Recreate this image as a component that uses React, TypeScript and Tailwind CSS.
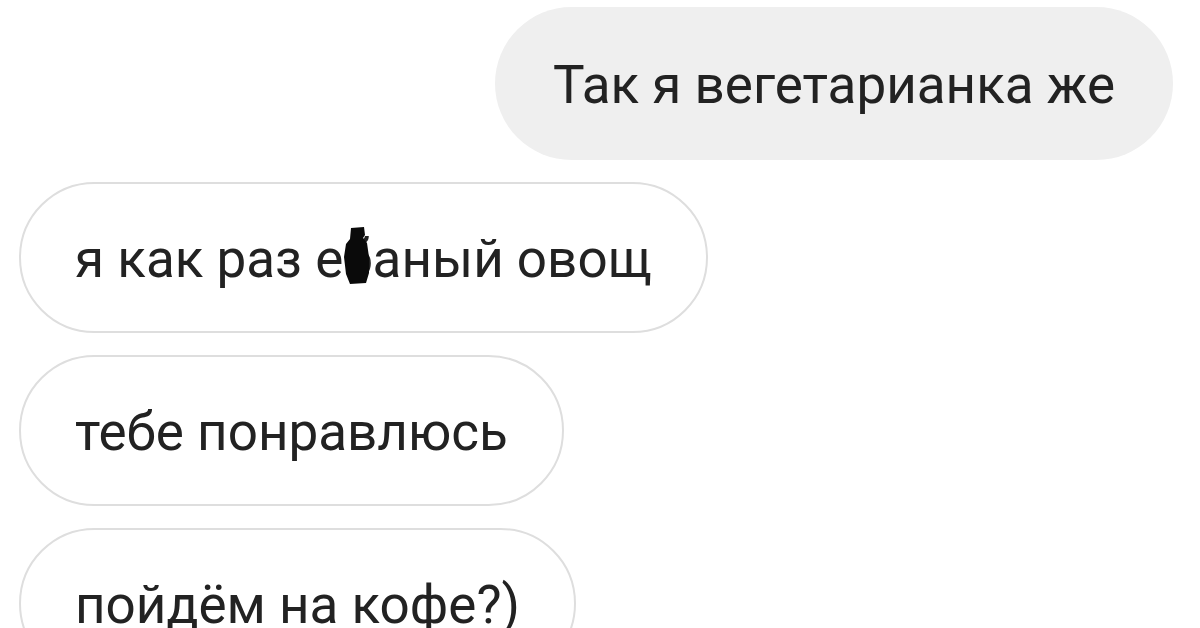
const Censored = ({ ch }: { ch: string }) => (
  <span className="relative inline-block">
    {ch}
    <svg
      className="absolute left-[1px] top-[-6px]"
      width="26"
      height="57"
      viewBox="0 0 26 57"
    >
      <path
        d="M7 1 L20 0 L21 8 L19 11 L23 16 L25 30 L25 46 L22 56 L6 57 L2 47 L0 30 L2 17 L6 12 Z"
        fill="#0a0a0a"
      />
    </svg>
  </span>
);

const Bubble = ({ children, mine }: { children: React.ReactNode; mine?: boolean }) => (
  <div
    className={
      mine
        ? "self-end mr-[27px] h-[153px] px-[58px] rounded-full bg-[#efefef] flex items-center shrink-0"
        : "self-start ml-[19px] h-[151px] px-[54px] rounded-full bg-white border-2 border-[#dedede] flex items-center shrink-0"
    }
  >
    <span className="text-[53px] leading-none text-[#222] whitespace-nowrap pt-[4px]">{children}</span>
  </div>
);

export default function App() {
  return (
    <div
      className="w-[1200px] h-[628px] overflow-hidden bg-white flex flex-col gap-[22px] pt-[7px]"
      style={{ fontFamily: "Roboto, 'Liberation Sans', sans-serif" }}
    >
      <Bubble mine>Так я вегетарианка же</Bubble>
      <Bubble>
        я как раз е<Censored ch="б" />аный овощ
      </Bubble>
      <Bubble>тебе понравлюсь</Bubble>
      <Bubble>пойдём на кофе?)</Bubble>
    </div>
  );
}
